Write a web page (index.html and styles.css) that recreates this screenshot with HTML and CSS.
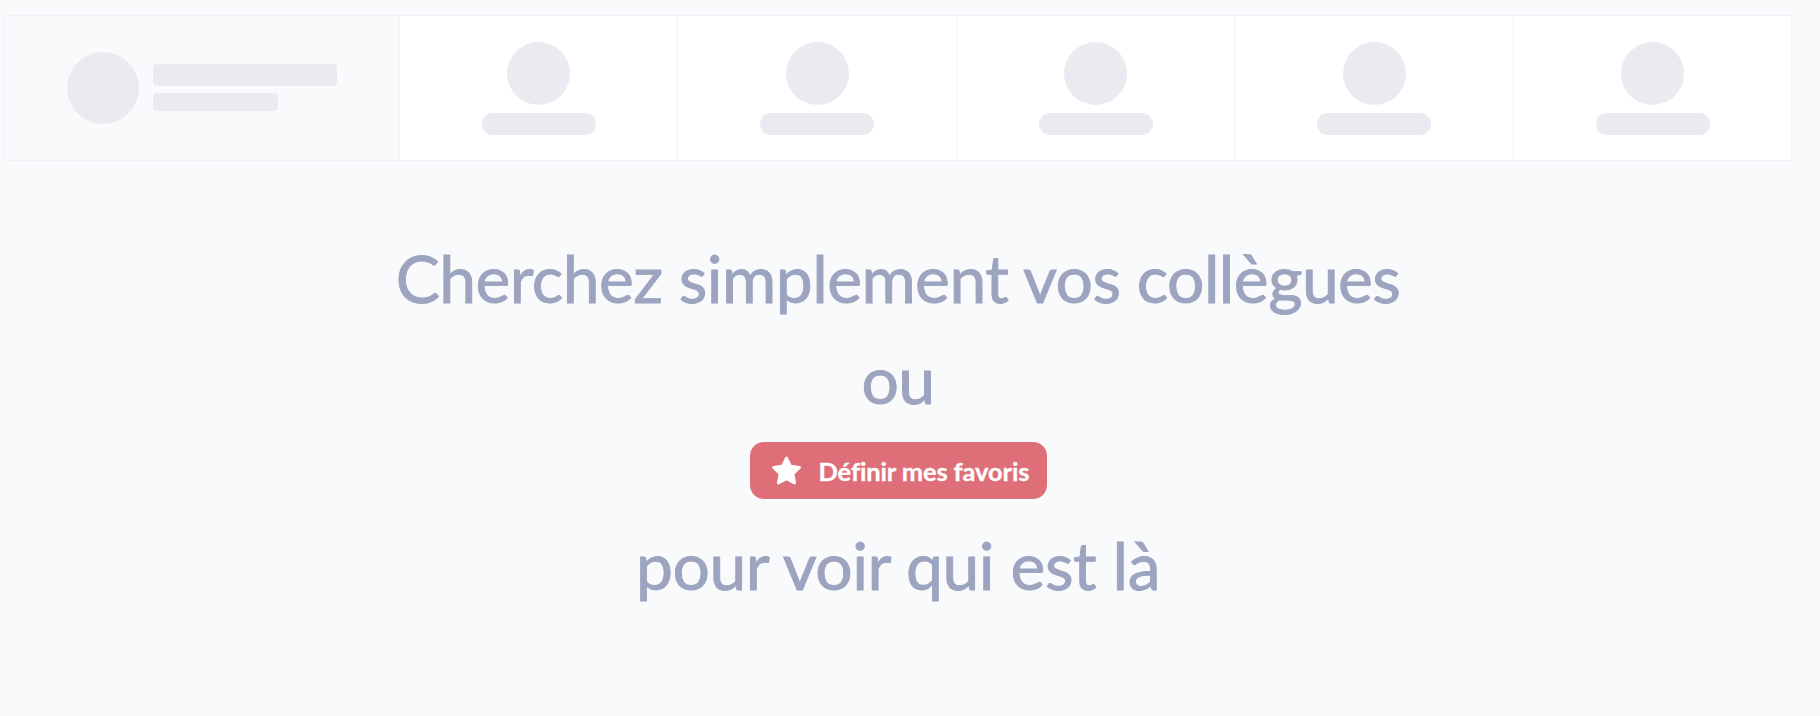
FILE: index.html
```
<!DOCTYPE html>
<html lang="fr">
<head>
<meta charset="utf-8">
<title>Mes collègues</title>
<link rel="stylesheet" href="styles.css">
</head>
<body>
<div class="row">
<div class="person"><span class="avatar"></span><div class="lines"><span class="line"></span><span class="line short"></span></div></div>
<div class="day"><span class="dot"></span><span class="pill"></span></div>
<div class="day"><span class="dot"></span><span class="pill"></span></div>
<div class="day"><span class="dot"></span><span class="pill"></span></div>
<div class="day"><span class="dot"></span><span class="pill"></span></div>
<div class="day"><span class="dot"></span><span class="pill"></span></div>
</div>
<main class="empty">
<p class="text">Cherchez simplement vos collègues</p>
<p class="text">ou</p>
<button class="favorites"><svg class="star" viewBox="0 0 30 30"><path d="M15 2l4 8.200 9 1.300-6.500 6.300 1.600 9.200L15 22.700 6.900 27l1.600-9.200L2 11.500l9-1.300z" fill="#fff" stroke="#fff" stroke-width="2.800" stroke-linejoin="round"/></svg><span class="label">Définir mes favoris</span></button>
<p class="text narrow">pour voir qui est là</p>
</main>
</body>
</html>
```
FILE: styles.css
```
* { box-sizing: border-box; }
body { margin: 0; height: 716px; overflow: hidden; background: #f9fafc; font-family: Lato, sans-serif; padding: 15px 28px 0 4px; }
.row { display: grid; grid-template-columns: 394px 278px 279px 278px 279px 278px; height: 146px; border: 1px solid #f2f3f8; background: #fff; }
.person { background: #f9fafc; display: flex; align-items: center; padding-left: 62px; gap: 14px; }
.avatar { width: 72px; height: 72px; border-radius: 50%; background: #ebeaf0; }
.lines { display: flex; flex-direction: column; gap: 7px; padding-bottom: 1px; }
.line { width: 184px; height: 22px; border-radius: 4px; background: #ebeaf0; }
.short { width: 125px; height: 18px; }
.day { border-left: 1px solid #f2f3f8; display: flex; flex-direction: column; align-items: center; padding-top: 26px; gap: 8px; }
.dot { width: 63px; height: 63px; border-radius: 50%; background: #ebeaf0; }
.pill { width: 114px; height: 22px; border-radius: 11px; background: #ebeaf0; }
.empty { display: flex; flex-direction: column; align-items: center; padding-top: 66px; }
.text { margin: 0; font-size: 66px; line-height: 101px; letter-spacing: -0.58px; color: #9ca4bf; -webkit-text-stroke: 0.9px #9ca4bf; white-space: nowrap; }
.narrow { letter-spacing: -0.5px; }
.favorites { width: 297px; height: 57px; margin: 13px 0 15px; border: 0; border-radius: 14px; background: #de6f79; color: #fff; display: flex; align-items: center; padding: 0 0 0 21px; gap: 17px; font: bold 25.5px Lato, sans-serif; letter-spacing: -0.13px; -webkit-text-stroke: 0.3px #fff; white-space: nowrap; }
.star { width: 31px; height: 30px; flex: none; }
```
